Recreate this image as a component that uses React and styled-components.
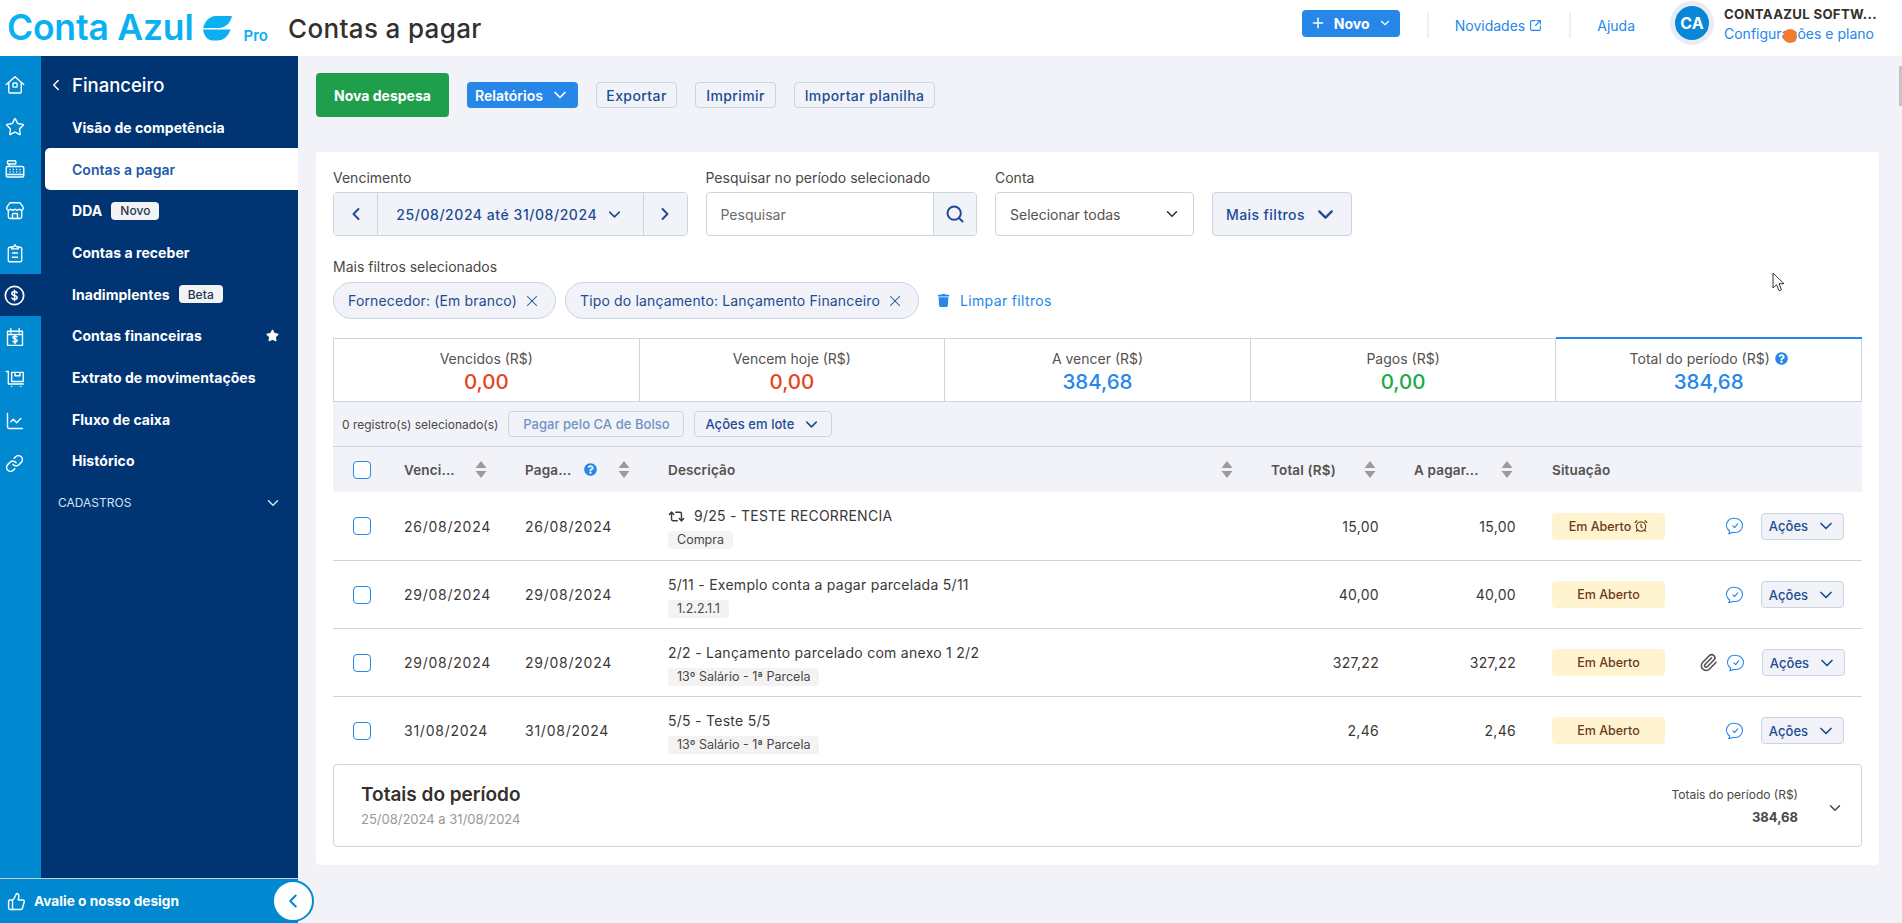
import React from 'react';
import styled, { createGlobalStyle } from 'styled-components';
import {
  Star, Store, ChevronDown, ChevronLeft, ChevronRight, Search, X, Plus,
  SquareArrowOutUpRight, Paperclip, AlarmClock, Repeat2, ThumbsUp, ChartLine, Link,
} from 'lucide-react';
import { FaStar, FaTrash, FaQuestionCircle } from 'react-icons/fa';

const GlobalStyle = createGlobalStyle`
  html, body { margin: 0; height: 100%; overflow: hidden; }
  body { font-family: Inter, "Open Sans", sans-serif; color: #3b3838; background: #f1f3f8; }
  * { box-sizing: border-box; }
`;

const Page = styled.div`
  display: flex;
  flex-direction: column;
  height: 923px;
  position: relative;
`;

// header
const Header = styled.header`
  height: 56px;
  background: #fff;
  display: flex;
  align-items: center;
`;

const LogoBox = styled.div`
  display: flex;
  align-items: center;
  width: 288px;
  padding-left: 7px;
`;

const LogoText = styled.span`
  font-size: 35.5px;
  font-weight: 600;
  color: #0bb0f2;
  letter-spacing: -0.2px;
  white-space: nowrap;
  line-height: 48px;
`;

const LogoLeaf = styled.svg`
  width: 29px;
  height: 25px;
  margin-left: 10px;
  flex-shrink: 0;
`;

const ProTag = styled.span`
  font-size: 15px;
  font-weight: 600;
  color: #0bb0f2;
  margin: 15px 0 0 11px;
`;

const PageTitle = styled.h1`
  margin: 0;
  font-size: 26px;
  font-weight: 500;
  color: #33302e;
  letter-spacing: 0.35px;
  flex: 1;
`;

const NewButton = styled.button`
  width: 98px;
  height: 27px;
  margin-bottom: 10px;
  border: none;
  border-radius: 4px;
  background: #2687e9;
  color: #fff;
  font: 700 14px Inter, sans-serif;
  display: flex;
  align-items: center;
  justify-content: center;
  gap: 8px;
`;

const HeaderDivider = styled.span`
  width: 2px;
  height: 26px;
  background: #eef0f4;
  margin: 0 0 6px ${p => p.$left}px;
`;

const HeaderLink = styled.a`
  font-size: 14px;
  color: #2687e9;
  display: flex;
  align-items: center;
  gap: 4px;
  margin: 0 0 6px ${p => p.$left}px;
`;

const Avatar = styled.div`
  width: 44px;
  height: 44px;
  border-radius: 50%;
  background: #0a86d8;
  border: 5px solid #e9ecf1;
  color: #fff;
  font-weight: 700;
  font-size: 16px;
  display: flex;
  align-items: center;
  justify-content: center;
  margin: 0 10px 10px 35px;
`;

const UserInfo = styled.div`
  width: 178px;
  display: flex;
  flex-direction: column;
  gap: 3px;
  margin-bottom: 8px;
  white-space: nowrap;
`;

const UserName = styled.span`
  font-size: 13.2px;
  font-weight: 700;
  color: #33302e;
  letter-spacing: 0.3px;
`;

const UserLink = styled.span`
  font-size: 14px;
  color: #2687e9;
`;

// body
const Body = styled.div`
  flex: 1;
  display: flex;
  min-height: 0;
`;

const Sidebar = styled.aside`
  width: 298px;
  flex-shrink: 0;
  display: flex;
  flex-direction: column;
`;

const SidebarTop = styled.div`
  flex: 1;
  display: flex;
`;

const Rail = styled.nav`
  width: 41px;
  background: #0088d1;
  padding-top: 8px;
`;

const RailItem = styled.div`
  height: 42px;
  display: flex;
  align-items: center;
  justify-content: center;
  padding-right: 12px;
  color: #fff;
  background: ${p => (p.$active ? '#003473' : 'transparent')};
`;

const Panel = styled.div`
  flex: 1;
  background: #003473;
  padding-top: 8px;
  color: #fff;
`;

const PanelTitle = styled.div`
  height: 42.5px;
  display: flex;
  align-items: center;
  font-size: 18.5px;
  font-weight: 500;
  padding-left: 6px;
  gap: 7px;
`;

const MenuItem = styled.div`
  height: 41.7px;
  margin-left: 4px;
  padding: 0 19px 0 27px;
  display: flex;
  align-items: center;
  gap: 9px;
  font-size: 14px;
  letter-spacing: 0.05px;
  white-space: nowrap;
  background: ${p => (p.$active ? '#fff' : 'transparent')};
  color: ${p => (p.$active ? '#1d5aa8' : '#fff')};
  font-weight: ${p => (p.$active ? 600 : 700)};
  border-radius: 5px 0 0 5px;
`;

const MenuBadge = styled.span`
  background: #f1f3f5;
  color: #26374f;
  border-radius: 4px;
  font-size: 12px;
  font-weight: 500;
  height: 18px;
  padding: 0 9px;
  display: flex;
  align-items: center;
`;

const MenuStar = styled.span`
  margin-left: auto;
  display: flex;
`;

const MenuGroup = styled.div`
  height: 42px;
  margin-left: 17px;
  padding-right: 16px;
  display: flex;
  align-items: center;
  justify-content: space-between;
  font-size: 12px;
  color: #cfe6f7;
`;

const RateBar = styled.div`
  height: 45px;
  background: #0088d1;
  border-top: 1px solid #c9cdd2;
  color: #fff;
  display: flex;
  align-items: center;
  gap: 8px;
  padding-left: 7px;
  font-size: 13.7px;
  font-weight: 700;
  position: relative;
`;

const CollapseButton = styled.button`
  position: absolute;
  right: -16px;
  top: 1px;
  width: 42px;
  height: 42px;
  border-radius: 50%;
  background: #fff;
  border: 2px solid #0088d1;
  color: #0088d1;
  display: flex;
  align-items: center;
  justify-content: center;
  padding: 0;
`;

const Main = styled.main`
  flex: 1;
  min-width: 0;
  padding: 17px 23px 0 18px;
`;

const Toolbar = styled.div`
  height: 44px;
  display: flex;
  align-items: center;
  gap: 18px;
`;

const GreenButton = styled.button`
  width: 133px;
  height: 44px;
  border: none;
  border-radius: 4px;
  background: #1f9e4b;
  color: #fff;
  font: 700 14px Inter, sans-serif;
`;

const BlueButton = styled.button`
  width: 111px;
  height: 26px;
  border: none;
  border-radius: 4px;
  background: #2687e9;
  color: #fff;
  font: 600 14px Inter, sans-serif;
  display: flex;
  align-items: center;
  justify-content: center;
  gap: 7px;
`;

const GhostButton = styled.button`
  height: ${p => p.$height || 26}px;
  width: ${p => p.$width}px;
  border: 1px solid #c9d5e0;
  border-radius: 4px;
  background: #f1f3f8;
  color: ${p => (p.$muted ? '#6f92c6' : '#1d4b94')};
  font: 500 ${p => p.$size || 13}px Inter, sans-serif;
  letter-spacing: ${p => (p.$size ? 0.4 : 0.05)}px;
  display: flex;
  align-items: center;
  justify-content: center;
  gap: 8px;
  padding: 0;
  white-space: nowrap;
`;

const Card = styled.section`
  height: 713px;
  margin-top: 35px;
  background: #fff;
  border-radius: 4px;
  padding: 17px 17px 0;
`;

const Filters = styled.div`
  display: flex;
  align-items: flex-end;
  gap: 18px;
`;

const Field = styled.div`
  width: ${p => p.$width}px;
  display: flex;
  flex-direction: column;
  gap: 5px;
`;

const FieldLabel = styled.label`
  font-size: 14px;
  line-height: 18px;
  color: #4a4745;
  white-space: nowrap;
`;

const Control = styled.div`
  height: 44px;
  display: flex;
  align-items: stretch;
  border: 1px solid #c9d5e0;
  border-radius: 4px;
  overflow: hidden;
  background: #fff;
  color: #1d4b94;
  font-size: 14px;
`;

const ControlCell = styled.div`
  width: ${p => p.$width}px;
  flex: ${p => (p.$width ? 'none' : 1)};
  display: flex;
  align-items: center;
  justify-content: center;
  gap: 8px;
  font-weight: 500;
  letter-spacing: 0.55px;
  background: #f1f3f8;
  white-space: nowrap;
  border-left: ${p => (p.$line === 'left' ? '1px solid #c9d5e0' : 'none')};
  border-right: ${p => (p.$line === 'right' ? '1px solid #c9d5e0' : 'none')};
`;

const InputText = styled.div`
  flex: 1;
  display: flex;
  align-items: center;
  justify-content: space-between;
  padding: 0 12px 0 14px;
  color: ${p => p.$color || '#6d6b6b'};
  font-size: 14px;
`;

const SelectedLabel = styled(FieldLabel)`
  display: block;
  margin-top: 22px;
`;

const Chips = styled.div`
  display: flex;
  align-items: center;
  gap: 9px;
  margin-top: 6px;
`;

const Chip = styled.div`
  height: 37px;
  width: ${p => p.$width}px;
  border: 1px solid #c9d5e0;
  border-radius: 19px;
  background: #f1f3f8;
  color: #1d4b94;
  font-size: 14px;
  letter-spacing: 0.15px;
  display: flex;
  align-items: center;
  justify-content: center;
  gap: 6px;
  white-space: nowrap;
`;

const ClearLink = styled.a`
  margin-left: 9px;
  color: #2687e9;
  font-size: 14px;
  letter-spacing: 0.35px;
  display: flex;
  align-items: center;
  gap: 10px;
`;

const Summary = styled.div`
  margin-top: 19px;
  height: 64px;
  display: grid;
  grid-template-columns: repeat(5, 1fr);
  border: 1px solid #c9d5e0;
  border-right: none;
`;

const SummaryCell = styled.div`
  border-right: 1px solid #c9d5e0;
  padding-top: 3px;
  display: flex;
  flex-direction: column;
  align-items: center;
  justify-content: center;
  gap: 2px;
  ${p => p.$active && 'box-shadow: 0 -2px 0 #2687e9;'}
`;

const SummaryLabel = styled.span`
  font-size: 14px;
  line-height: 18px;
  color: #55514f;
  display: flex;
  align-items: center;
  gap: 5px;
`;

const SummaryValue = styled.span`
  font-size: 20.5px;
  line-height: 24px;
  font-weight: 500;
  color: ${p => p.$color};
`;

const BatchBar = styled.div`
  height: 45px;
  background: #f1f3f8;
  border-bottom: 1px solid #c9d5e0;
  display: flex;
  align-items: center;
  gap: 10px;
  padding-left: 9px;
  font-size: 12px;
  color: #4a4745;
`;

const TableGrid = styled.div`
  display: grid;
  grid-template-columns: 71px 121px 143px 590px 134px 138px 332px;
`;

const HeaderRow = styled(TableGrid)`
  height: 45px;
  background: #f1f3f8;
`;

const Row = styled(TableGrid)`
  height: 68px;
  border-top: ${p => (p.$first ? 'none' : '1px solid #c9d5e0')};
`;

const HeadCell = styled.div`
  display: flex;
  align-items: center;
  padding: 0 ${p => p.$right || 0}px 0 ${p => p.$left || 0}px;
  font-size: 13.5px;
  letter-spacing: 0.15px;
  font-weight: 600;
  color: #55514f;
  white-space: nowrap;
`;

const SortSlot = styled.span`
  margin-left: auto;
  display: flex;
`;

const HelpSlot = styled(SortSlot)`
  margin-right: 21px;
`;

const Checkbox = styled.span`
  width: 18px;
  height: 18px;
  border: 1.3px solid #2687e9;
  border-radius: 4px;
  background: #fff;
  margin-left: 20px;
`;

const Cell = styled.div`
  display: flex;
  align-items: center;
  font-size: 14px;
  letter-spacing: 0.3px;
  color: #3b3838;
  padding: 0 ${p => p.$right || 0}px 0 ${p => p.$left || 0}px;
  justify-content: ${p => (p.$end ? 'flex-end' : 'flex-start')};
`;

const DateCell = styled(Cell)`
  letter-spacing: 0.75px;
`;

const DescCell = styled.div`
  padding-top: 15px;
  display: flex;
  flex-direction: column;
  align-items: flex-start;
  gap: 6px;
`;

const DescText = styled.span`
  font-size: 14px;
  letter-spacing: 0.27px;
  line-height: 18px;
  color: #3b3838;
  display: flex;
  align-items: center;
  gap: 9px;
`;

const Tag = styled.span`
  height: 18px;
  background: #f3f3f3;
  border-radius: 4px;
  padding: 0 9px;
  font-size: 12.5px;
  line-height: 18px;
  color: #4a4745;
`;

const StatusBadge = styled.span`
  width: 113px;
  height: 27px;
  background: #fff4cf;
  color: #6b3a1e;
  font-size: 12.5px;
  letter-spacing: 0;
  font-weight: 500;
  border-radius: 4px;
  display: flex;
  align-items: center;
  justify-content: center;
  gap: 3px;
`;

const RowActions = styled.div`
  margin-left: auto;
  display: flex;
  align-items: center;
  gap: 17px;
  padding-right: ${p => (p.$withClip ? 17 : 18)}px;
`;

const ClipIcon = styled(Paperclip)`
  margin-right: -8px;
  color: #55514f;
`;

const TotalsBox = styled.div`
  height: 83px;
  border: 1px solid #c9d5e0;
  border-radius: 4px;
  display: flex;
  justify-content: space-between;
  padding: 19px 17px 0 27px;
`;

const TotalsLeft = styled.div`
  display: flex;
  flex-direction: column;
  gap: 5px;
`;

const TotalsTitle = styled.span`
  font-size: 19px;
  line-height: 22px;
  font-weight: 600;
  color: #33302e;
`;

const TotalsRange = styled.span`
  font-size: 13px;
  color: #9a9898;
`;

const TotalsRight = styled.div`
  display: flex;
  gap: 28px;
`;

const TotalsValues = styled.div`
  display: flex;
  flex-direction: column;
  align-items: flex-end;
  gap: 4px;
  padding-top: 2px;
  font-size: 12px;
  line-height: 18px;
  color: #4a4745;
`;

const TotalsSum = styled.strong`
  font-size: 13px;
  color: #4a4745;
`;

const TotalsChevron = styled.span`
  color: #4a4745;
  margin-top: 15px;
  display: flex;
`;

// things floating over the page: the recorder's click dot, the pointer and a scrollbar thumb
const ClickDot = styled.span`
  position: absolute;
  left: 1783px;
  top: 29px;
  width: 14px;
  height: 14px;
  border-radius: 50%;
  background: #f47a2c;
`;

const Pointer = styled.svg`
  position: absolute;
  left: 1772px;
  top: 272px;
  width: 13px;
  height: 20px;
`;

const ScrollThumb = styled.span`
  position: absolute;
  right: 0;
  top: 66px;
  width: 3px;
  height: 40px;
  background: #c4c4c4;
`;

// icons with no match in the packages
const RailSvg = ({ children }) => (
  <svg width="20" height="20" viewBox="0 0 24 24" fill="none" stroke="#fff" strokeWidth="1.7" strokeLinecap="round" strokeLinejoin="round">
    {children}
  </svg>
);

const HomeIcon = () => (
  <RailSvg>
    <path d="M1.500 11.500L12 2l10.500 9.500M4.500 9v11A1.500 1.500 0 0 0 6 21.500h12a1.500 1.500 0 0 0 1.500-1.500V9" />
    <rect x="9.500" y="9.500" width="5" height="5" rx="1" />
  </RailSvg>
);

const RegisterIcon = () => (
  <RailSvg>
    <rect x="3" y="2" width="10" height="4" rx="1" />
    <path d="M5 6v3M3 9h18a1.500 1.500 0 0 1 1.500 1.500V20a1.500 1.500 0 0 1-1.500 1.500H3A1.500 1.500 0 0 1 1.500 20V10.500A1.500 1.500 0 0 1 3 9z" />
    <path d="M6 12.500h.01M10 12.500h.01M14 12.500h.01M18 12.500h.01M6 15.500h.01M10 15.500h.01M14 15.500h.01M18 15.500h.01M2 18.500h20" />
  </RailSvg>
);

const ClipboardIcon = () => (
  <RailSvg>
    <path d="M8 5H5.500A1.500 1.500 0 0 0 4 6.500V21a1.500 1.500 0 0 0 1.500 1.500h13A1.500 1.500 0 0 0 20 21V6.500A1.500 1.500 0 0 0 18.500 5H16" />
    <path d="M8 7V4.500h2.500L12 2l1.500 2.500H16V7zM9 12h6M9 17h6" />
  </RailSvg>
);

const DollarCircleIcon = () => (
  <svg width="21" height="21" viewBox="0 0 24 24" fill="none" stroke="#fff" strokeLinecap="round" strokeLinejoin="round">
    <circle cx="12" cy="12" r="10.500" strokeWidth="2" />
    <path strokeWidth="1.800" d="M15 9c-.5-1-1.600-1.500-3-1.500-1.700 0-3 .8-3 2.200 0 3 6 1.600 6 4.600 0 1.400-1.300 2.200-3 2.200-1.500 0-2.600-.6-3-1.600M12 6v12" />
  </svg>
);

const CalendarDollarIcon = () => (
  <RailSvg>
    <path d="M3 5h18v17H3zM3 9h18M7 2v5M17 2v5" />
    <path d="M14.500 12c-.4-.6-1.300-1-2.500-1-1.500 0-2.500.7-2.500 1.700 0 2.300 5 1.200 5 3.600 0 1-1 1.700-2.500 1.700-1.200 0-2.100-.4-2.500-1.100M12 10v10" />
  </RailSvg>
);

const CartIcon = () => (
  <RailSvg>
    <path d="M1.500 3H4v15h18" />
    <rect x="8" y="4" width="14" height="11" />
    <path d="M12 4v4h6V4M8 21h.01M19 21h.01" />
  </RailSvg>
);

const LeafMark = () => (
  <LogoLeaf viewBox="0 0 29 25" fill="#0bb0f2">
    <path d="M29 0H13C6 0.500 2 5 0 12h17C24 11 27.500 6 29 0z" />
    <path d="M0 13.500h27.500C25.500 20 21 24.500 14 24.500H9C3.500 24 1 19 0 13.500z" />
  </LogoLeaf>
);

const SortIcon = () => (
  <svg width="12" height="17" viewBox="0 0 12 17" fill="#9d9a9c">
    <path d="M6 0l5.500 7H.5zM.5 10h11L6 17z" />
  </svg>
);

const CommentIcon = () => (
  <svg width="18" height="18" viewBox="0 0 18 18" fill="none" stroke="#2687e9" strokeWidth="1.100" strokeLinecap="round" strokeLinejoin="round">
    <path d="M9.500 1.500a7 7 0 0 1 0 14c-1.800 0-3-.4-4 .2-.6.400-1.600 1-2.800 1 .7-.8 1-1.700.9-2.700A7 7 0 0 1 9.500 1.500z" />
    <path d="M6.800 8.800l1.800 1.800 3-3.800" />
  </svg>
);

const Help = ({ size = 13 }) => <FaQuestionCircle size={size} color="#2687e9" />;

const railItems = [
  { icon: <HomeIcon /> },
  { icon: <Star size={20} strokeWidth={1.7} /> },
  { icon: <RegisterIcon /> },
  { icon: <Store size={20} strokeWidth={1.7} /> },
  { icon: <ClipboardIcon /> },
  { icon: <DollarCircleIcon />, active: true },
  { icon: <CalendarDollarIcon /> },
  { icon: <CartIcon /> },
  { icon: <ChartLine size={20} strokeWidth={1.7} /> },
  { icon: <Link size={19} strokeWidth={1.9} /> },
];

const summary = [
  { label: 'Vencidos (R$)', value: '0,00', color: '#e8431f' },
  { label: 'Vencem hoje (R$)', value: '0,00', color: '#e8431f' },
  { label: 'A vencer (R$)', value: '384,68', color: '#2687e9' },
  { label: 'Pagos (R$)', value: '0,00', color: '#1fa84a' },
  { label: 'Total do período (R$)', value: '384,68', color: '#2687e9', help: true, active: true },
];

const rows = [
  { date: '26/08/2024', desc: '9/25 - TESTE RECORRENCIA', tag: 'Compra', value: '15,00', recurring: true, alarm: true },
  { date: '29/08/2024', desc: '5/11 - Exemplo conta a pagar parcelada 5/11', tag: '1.2.2.1.1', value: '40,00' },
  { date: '29/08/2024', desc: '2/2 - Lançamento parcelado com anexo 1 2/2', tag: '13º Salário - 1ª Parcela', value: '327,22', clip: true },
  { date: '31/08/2024', desc: '5/5 - Teste 5/5', tag: '13º Salário - 1ª Parcela', value: '2,46' },
];

const App = () => (
  <Page>
    <GlobalStyle />
    <Header>
      <LogoBox>
        <LogoText>Conta Azul</LogoText>
        <LeafMark />
        <ProTag>Pro</ProTag>
      </LogoBox>
      <PageTitle>Contas a pagar</PageTitle>
      <NewButton>
        <Plus size={16} strokeWidth={2.2} /> Novo <ChevronDown size={14} />
      </NewButton>
      <HeaderDivider $left={27} />
      <HeaderLink $left={26}>
        Novidades <SquareArrowOutUpRight size={13} />
      </HeaderLink>
      <HeaderDivider $left={27} />
      <HeaderLink $left={26}>Ajuda</HeaderLink>
      <Avatar>CA</Avatar>
      <UserInfo>
        <UserName>CONTAAZUL SOFTW...</UserName>
        <UserLink>Configurações e plano</UserLink>
      </UserInfo>
    </Header>

    <Body>
      <Sidebar>
        <SidebarTop>
          <Rail>
            {railItems.map((item, index) => (
              <RailItem key={index} $active={item.active}>{item.icon}</RailItem>
            ))}
          </Rail>
          <Panel>
            <PanelTitle>
              <ChevronLeft size={18} /> Financeiro
            </PanelTitle>
            <MenuItem>Visão de competência</MenuItem>
            <MenuItem $active>Contas a pagar</MenuItem>
            <MenuItem>DDA <MenuBadge>Novo</MenuBadge></MenuItem>
            <MenuItem>Contas a receber</MenuItem>
            <MenuItem>Inadimplentes <MenuBadge>Beta</MenuBadge></MenuItem>
            <MenuItem>
              Contas financeiras
              <MenuStar><FaStar size={13} /></MenuStar>
            </MenuItem>
            <MenuItem>Extrato de movimentações</MenuItem>
            <MenuItem>Fluxo de caixa</MenuItem>
            <MenuItem>Histórico</MenuItem>
            <MenuGroup>
              CADASTROS <ChevronDown size={18} />
            </MenuGroup>
          </Panel>
        </SidebarTop>
        <RateBar>
          <ThumbsUp size={19} strokeWidth={1.8} /> Avalie o nosso design
          <CollapseButton><ChevronLeft size={22} strokeWidth={2.2} /></CollapseButton>
        </RateBar>
      </Sidebar>

      <Main>
        <Toolbar>
          <GreenButton>Nova despesa</GreenButton>
          <BlueButton>Relatórios <ChevronDown size={20} /></BlueButton>
          <GhostButton $width={81} $size={14}>Exportar</GhostButton>
          <GhostButton $width={81} $size={14}>Imprimir</GhostButton>
          <GhostButton $width={141} $size={14}>Importar planilha</GhostButton>
        </Toolbar>

        <Card>
          <Filters>
            <Field $width={354.5}>
              <FieldLabel>Vencimento</FieldLabel>
              <Control>
                <ControlCell $width={44} $line="right"><ChevronLeft size={20} strokeWidth={2.4} /></ControlCell>
                <ControlCell>25/08/2024 até 31/08/2024 <ChevronDown size={19} /></ControlCell>
                <ControlCell $width={44} $line="left"><ChevronRight size={20} strokeWidth={2.4} /></ControlCell>
              </Control>
            </Field>
            <Field $width={271.5}>
              <FieldLabel>Pesquisar no período selecionado</FieldLabel>
              <Control>
                <InputText>Pesquisar</InputText>
                <ControlCell $width={43} $line="left"><Search size={20} strokeWidth={2.4} /></ControlCell>
              </Control>
            </Field>
            <Field $width={199}>
              <FieldLabel>Conta</FieldLabel>
              <Control>
                <InputText $color="#55514f">
                  Selecionar todas <ChevronDown size={18} color="#33302e" />
                </InputText>
              </Control>
            </Field>
            <GhostButton $width={140} $height={44} $size={14}>Mais filtros <ChevronDown size={25} strokeWidth={2.2} /></GhostButton>
          </Filters>

          <SelectedLabel>Mais filtros selecionados</SelectedLabel>
          <Chips>
            <Chip $width={223}>Fornecedor: (Em branco) <X size={18} strokeWidth={1.4} /></Chip>
            <Chip $width={354}>Tipo do lançamento: Lançamento Financeiro <X size={18} strokeWidth={1.4} /></Chip>
            <ClearLink><FaTrash size={13} /> Limpar filtros</ClearLink>
          </Chips>

          <Summary>
            {summary.map(item => (
              <SummaryCell key={item.label} $active={item.active}>
                <SummaryLabel>
                  {item.label}
                  {item.help && <Help />}
                </SummaryLabel>
                <SummaryValue $color={item.color}>{item.value}</SummaryValue>
              </SummaryCell>
            ))}
          </Summary>

          <BatchBar>
            0 registro(s) selecionado(s)
            <GhostButton $width={176} $muted>Pagar pelo CA de Bolso</GhostButton>
            <GhostButton $width={138}>Ações em lote <ChevronDown size={19} /></GhostButton>
          </BatchBar>

          <HeaderRow>
            <HeadCell><Checkbox /></HeadCell>
            <HeadCell $right={38}>Venci... <SortSlot><SortIcon /></SortSlot></HeadCell>
            <HeadCell $right={38}>
              Paga... <HelpSlot><Help /></HelpSlot> <SortIcon />
            </HeadCell>
            <HeadCell $right={25}>Descrição <SortSlot><SortIcon /></SortSlot></HeadCell>
            <HeadCell $left={13} $right={16}>Total (R$) <SortSlot><SortIcon /></SortSlot></HeadCell>
            <HeadCell $left={22} $right={17}>A pagar... <SortSlot><SortIcon /></SortSlot></HeadCell>
            <HeadCell $left={22}>Situação</HeadCell>
          </HeaderRow>

          {rows.map((row, index) => (
            <Row key={index} $first={index === 0}>
              <Cell><Checkbox /></Cell>
              <DateCell>{row.date}</DateCell>
              <DateCell>{row.date}</DateCell>
              <DescCell>
                <DescText>
                  {row.recurring && <Repeat2 size={17} />}
                  {row.desc}
                </DescText>
                <Tag>{row.tag}</Tag>
              </DescCell>
              <Cell $end $right={13}>{row.value}</Cell>
              <Cell $end $right={14}>{row.value}</Cell>
              <Cell $left={22}>
                <StatusBadge>
                  Em Aberto
                  {row.alarm && <AlarmClock size={14} />}
                </StatusBadge>
                <RowActions $withClip={row.clip}>
                  {row.clip && <ClipIcon size={19} />}
                  <CommentIcon />
                  <GhostButton $width={83} $height={27}>Ações <ChevronDown size={20} strokeWidth={2} /></GhostButton>
                </RowActions>
              </Cell>
            </Row>
          ))}

          <TotalsBox>
            <TotalsLeft>
              <TotalsTitle>Totais do período</TotalsTitle>
              <TotalsRange>25/08/2024 a 31/08/2024</TotalsRange>
            </TotalsLeft>
            <TotalsRight>
              <TotalsValues>
                Totais do período (R$)
                <TotalsSum>384,68</TotalsSum>
              </TotalsValues>
              <TotalsChevron><ChevronDown size={18} /></TotalsChevron>
            </TotalsRight>
          </TotalsBox>
        </Card>
      </Main>
    </Body>

    <ClickDot />
    <Pointer viewBox="0 0 13 20">
      <path d="M1 1v15l3.500-3.300 2.500 6 2.500-1-2.500-6H12z" fill="#fff" stroke="#333" strokeWidth="1" />
    </Pointer>
    <ScrollThumb />
  </Page>
);

export default App;
